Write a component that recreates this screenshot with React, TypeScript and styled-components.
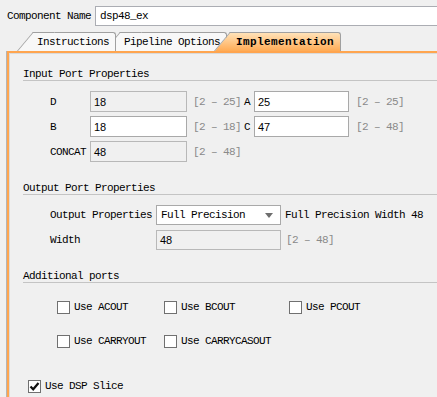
import styled, { createGlobalStyle, css } from "styled-components";

const GlobalStyle = createGlobalStyle`
  html, body {
    margin: 0;
    padding: 0;
    background: #f0f0f0;
  }
  body {
    font-family: "Liberation Mono", "DejaVu Sans Mono", monospace;
    font-size: 11px;
    letter-spacing: -0.6px;
    color: #000;
  }
`;

const Page = styled.div`
  width: 437px;
  height: 397px;
  overflow: hidden;
  background: #f0f0f0;
`;

const NameRow = styled.div`
  display: flex;
  align-items: center;
  padding: 6px 0 0 7px;
  height: 20px;
`;

const NameLabel = styled.span`
  width: 88px;
  flex: none;
`;

const NameInput = styled.div`
  flex: 1;
  height: 20px;
  box-sizing: border-box;
  border: 1px solid #abadb3;
  border-right: none;
  background: #fff;
  padding-left: 4px;
  display: flex;
  align-items: center;
`;

const TabBar = styled.div`
  display: flex;
  height: 19px;
  margin-top: 6px;
  padding-left: 17px;
`;

const Tab = styled.div<{ $active?: boolean; $z: number; $shift?: number }>`
  position: relative;
  z-index: ${(p) => p.$z};
  height: 19px;
  line-height: 20px;
  margin-left: ${(p) => p.$shift ?? 0}px;
  padding: 0 7px 0 ${(p) => (p.$active ? 22 : 20)}px;
  white-space: nowrap;
  ${(p) =>
    p.$active &&
    css`
      font-weight: bold;
      letter-spacing: 0.4px;
    `}

  &::before,
  &::after {
    content: "";
    position: absolute;
    top: 0;
    bottom: 0;
    box-sizing: border-box;
    border-top: 1px solid #a0a0a0;
    background: ${(p) =>
      p.$active ? "linear-gradient(#ffe2b8, #ffab55)" : "#f8f8f8"};
  }

  &::before {
    left: 0;
    width: 22px;
    border-left: 1px solid #a0a0a0;
    transform-origin: bottom left;
    transform: skewX(-40deg);
    z-index: -1;
  }

  &::after {
    left: 16px;
    right: 0;
    border-right: 1px solid #a0a0a0;
    border-top-right-radius: 3px;
    z-index: -2;
  }
`;

const TabText = styled.span`
  position: relative;
`;

const Panel = styled.div`
  margin-left: 7px;
  height: 344px;
  border-top: 2px solid #ffa54f;
  border-left: 2px solid #ffa54f;
  box-shadow: -1px 0 0 #b4b4b4, inset 1px 1px 0 #dadada;
  padding-left: 14px;
`;

const Heading = styled.div<{ $top: number }>`
  margin-top: ${(p) => p.$top}px;
  height: 12px;
  line-height: 12px;
  border-bottom: 1px solid #c4c4c4;
`;

const Rows = styled.div<{ $top: number; $gap: number }>`
  margin-top: ${(p) => p.$top}px;
  padding-left: 27px;
  display: flex;
  flex-direction: column;
  row-gap: ${(p) => p.$gap}px;
`;

const Row = styled.div<{ $h: number }>`
  display: flex;
  align-items: center;
  height: ${(p) => p.$h}px;
`;

const Label = styled.span<{ $w: number }>`
  width: ${(p) => p.$w}px;
  flex: none;
`;

const SubLabel = styled.span`
  width: 10px;
  margin-left: 3px;
  flex: none;
`;

const Field = styled.div<{ $w: number; $disabled?: boolean }>`
  width: ${(p) => p.$w}px;
  height: 100%;
  box-sizing: border-box;
  flex: none;
  display: flex;
  align-items: center;
  padding-left: 3px;
  font-family: "Liberation Sans", Arial, sans-serif;
  font-size: 11px;
  letter-spacing: 0;
  border: 1px solid ${(p) => (p.$disabled ? "#b8b8b8" : "#a9a9a9")};
  background: ${(p) => (p.$disabled ? "#f0f0f0" : "#fff")};
`;

const Range = styled.span<{ $left: number }>`
  margin-left: ${(p) => p.$left}px;
  width: 48px;
  flex: none;
  color: #8a8a8a;
`;

const Select = styled.div`
  width: 125px;
  height: 100%;
  box-sizing: border-box;
  flex: none;
  display: flex;
  align-items: center;
  justify-content: space-between;
  padding: 0 7px 0 4px;
  border: 1px solid #a9a9a9;
  background: #fff;
`;

const Arrow = styled.span`
  width: 0;
  height: 0;
  border-left: 4px solid transparent;
  border-right: 4px solid transparent;
  border-top: 5px solid #6e6e6e;
`;

const Note = styled.span`
  margin-left: 4px;
  white-space: nowrap;
`;

const CheckGrid = styled.div`
  margin-top: 14px;
  padding-left: 34px;
  display: grid;
  grid-template-columns: 107px 125px auto;
  grid-auto-rows: 20px;
  row-gap: 14px;
`;

const CheckItem = styled.label<{ $left?: number; $top?: number }>`
  display: flex;
  align-items: center;
  column-gap: 4px;
  white-space: nowrap;
  margin-left: ${(p) => p.$left ?? 0}px;
  margin-top: ${(p) => p.$top ?? 0}px;
  height: 20px;
`;

const Box = styled.span`
  width: 13px;
  height: 13px;
  box-sizing: border-box;
  border: 1px solid #707070;
  background: #fff;
  display: flex;
  align-items: center;
  justify-content: center;
  flex: none;
`;

const Check = ({ label, checked, left, top }: { label: string; checked?: boolean; left?: number; top?: number }) => (
  <CheckItem $left={left} $top={top}>
    <Box>
      {checked && (
        <svg width="11" height="11" viewBox="0 0 11 11">
          <path d="M1.5 5.5 L4.2 8.3 L9.5 2" fill="none" stroke="#111" strokeWidth="2.2" />
        </svg>
      )}
    </Box>
    {label}
  </CheckItem>
);

export default function App() {
  return (
    <Page>
      <GlobalStyle />
      <NameRow>
        <NameLabel>Component Name</NameLabel>
        <NameInput>dsp48_ex</NameInput>
      </NameRow>

      <TabBar>
        <Tab $z={2}>
          <TabText>Instructions</TabText>
        </Tab>
        <Tab $z={1} $shift={-12}>
          <TabText>Pipeline Options</TabText>
        </Tab>
        <Tab $z={3} $shift={-13} $active>
          <TabText>Implementation</TabText>
        </Tab>
      </TabBar>

      <Panel>
        <Heading $top={15}>Input Port Properties</Heading>
        <Rows $top={10} $gap={4}>
          <Row $h={21}>
            <Label $w={40}>D</Label>
            <Field $w={97} $disabled>18</Field>
            <Range $left={6}>[2 – 25]</Range>
            <SubLabel>A</SubLabel>
            <Field $w={95}>25</Field>
            <Range $left={7}>[2 – 25]</Range>
          </Row>
          <Row $h={21}>
            <Label $w={40}>B</Label>
            <Field $w={97}>18</Field>
            <Range $left={6}>[2 – 18]</Range>
            <SubLabel>C</SubLabel>
            <Field $w={95}>47</Field>
            <Range $left={7}>[2 – 48]</Range>
          </Row>
          <Row $h={21}>
            <Label $w={40}>CONCAT</Label>
            <Field $w={97} $disabled>48</Field>
            <Range $left={6}>[2 – 48]</Range>
          </Row>
        </Rows>

        <Heading $top={20}>Output Port Properties</Heading>
        <Rows $top={10} $gap={5}>
          <Row $h={20}>
            <Label $w={106}>Output Properties</Label>
            <Select>
              Full Precision
              <Arrow />
            </Select>
            <Note>Full Precision Width 48</Note>
          </Row>
          <Row $h={20}>
            <Label $w={106}>Width</Label>
            <Field $w={125} $disabled>48</Field>
            <Range $left={5}>[2 – 48]</Range>
          </Row>
        </Rows>

        <Heading $top={20}>Additional ports</Heading>
        <CheckGrid>
          <Check label="Use ACOUT" />
          <Check label="Use BCOUT" />
          <Check label="Use PCOUT" />
          <Check label="Use CARRYOUT" />
          <Check label="Use CARRYCASOUT" />
        </CheckGrid>
        <Check label="Use DSP Slice" checked left={5} top={25} />
      </Panel>
    </Page>
  );
}
